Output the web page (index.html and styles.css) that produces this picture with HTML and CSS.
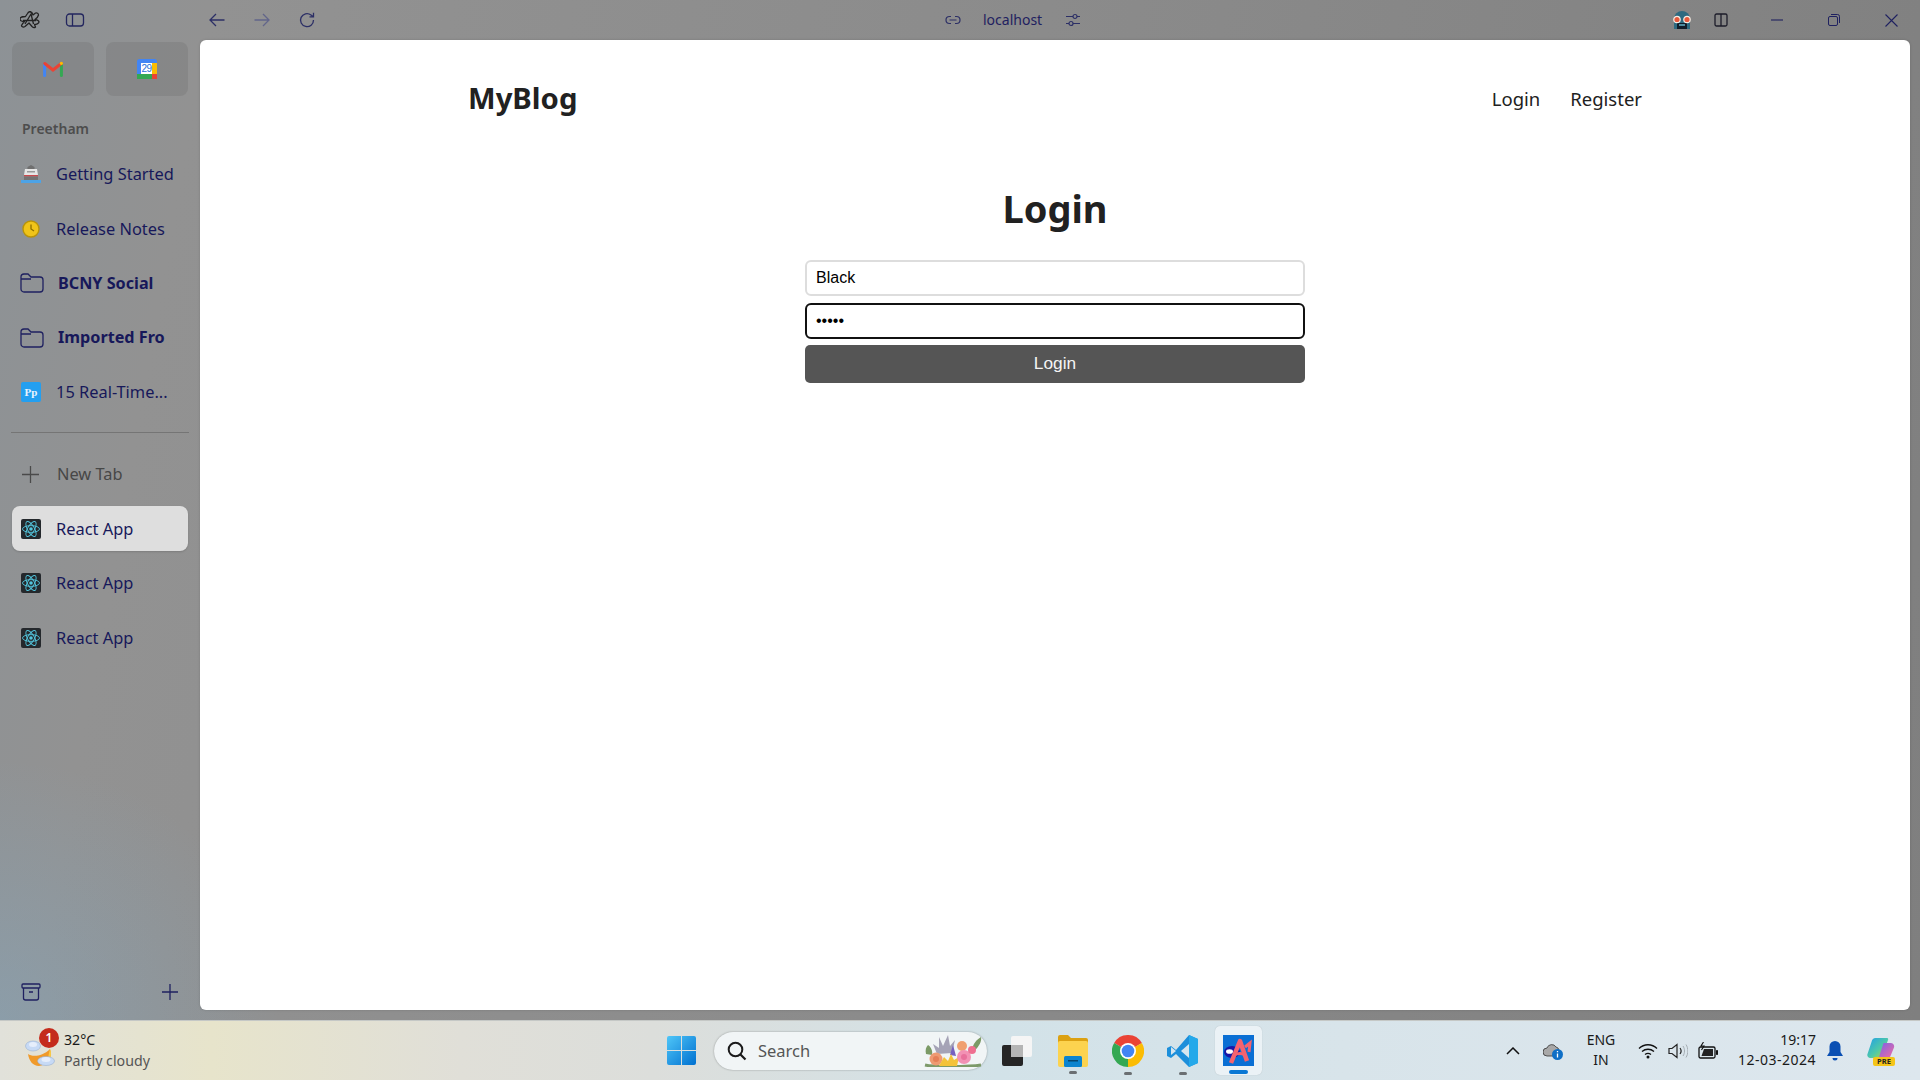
FILE: index.html
```html
<!DOCTYPE html>
<html lang="en">
<head>
  <meta charset="UTF-8">
  <title>React App</title>
  <link rel="stylesheet" href="styles.css">
</head>
<body>

<div class="browser">
  <!-- top bar of the browser window -->
  <header class="toolbar">
    <svg class="icon logo-arc" viewBox="0 0 20 18"><path d="M10.500 1c1.500 0 2 1.500 2.500 3l2.500-2c1.500-.5 3 .5 3 2-.5 2-2 3.500-3.500 4.500 1.500.5 4 1 4 2.500 0 1.500-3 2.500-4.500 2.500l1 2.500c-1 1-2.500.5-3.500-.5l-3-3.500-4 3.500c-1.500 1-3.500.5-3.500-1 .5-1.500 2-3 3-4-2 0-4.500-.5-4.500-2.500s3.500-2.500 5.500-2.500l2-3c.5-1 1.500-2 3-2z M5 13 11 3l2.500 10 M3 9.500h13" fill="none" stroke="#222" stroke-width="1.300" stroke-linejoin="round"/></svg>
    <svg class="icon panel-toggle" viewBox="0 0 20 16"><rect x="1.500" y="2" width="17" height="12" rx="3" fill="none" stroke="#23265e" stroke-width="1.300"/><path d="M7.500 2v12" stroke="#23265e" stroke-width="1.300"/></svg>
    <svg class="icon nav-back" viewBox="0 0 16 16"><path d="M15.500 8H1 M7 2 1 8l6 6" fill="none" stroke="#2c2f66" stroke-width="1.300"/></svg>
    <svg class="icon nav-forward" viewBox="0 0 16 16"><path d="M.5 8H15 M9 2l6 6-6 6" fill="none" stroke="#62658a" stroke-width="1.300"/></svg>
    <svg class="icon nav-reload" viewBox="0 0 16 16"><path d="M14.500 8A6.500 6.500 0 1 1 12 3l2 1.500 M14.500 .8v4h-4" fill="none" stroke="#2c2f66" stroke-width="1.300"/></svg>
    <svg class="icon url-link" viewBox="0 0 16 12"><path d="M6 2.500H4.500a3.500 3.500 0 0 0 0 7H6 M10 2.500h1.500a3.500 3.500 0 0 1 0 7H10 M4.500 6h7" fill="none" stroke="#2c2f66" stroke-width="1.200"/></svg>
    <span class="url-text">localhost</span>
    <svg class="icon url-tune" viewBox="0 0 16 14"><path d="M1 3.500h7 M12 3.500h3 M1 10.500h3 M8 10.500h7" stroke="#2c2f66" stroke-width="1.200"/><circle cx="10" cy="3.500" r="2" fill="none" stroke="#2c2f66" stroke-width="1.200"/><circle cx="6" cy="10.500" r="2" fill="none" stroke="#2c2f66" stroke-width="1.200"/></svg>

    <svg class="icon avatar" viewBox="0 0 20 20"><path d="M2 19V9a8 8 0 0 1 16 0v10z" fill="#2d6a80"/><rect x="5" y="13" width="10" height="6" fill="#111d28"/><rect x="7" y="14" width="6" height="2" fill="#4d8ca0"/><circle cx="5" cy="9.500" r="3.200" fill="#e8593b" stroke="#f3eee6" stroke-width="1.200"/><circle cx="15" cy="9.500" r="3.200" fill="#e8593b" stroke="#f3eee6" stroke-width="1.200"/></svg>
    <svg class="icon split" viewBox="0 0 14 14"><rect x="1" y="1" width="12" height="12" rx="1.500" fill="none" stroke="#1d1d2a" stroke-width="1.300"/><path d="M7 1v12" stroke="#1d1d2a" stroke-width="1.300"/></svg>
    <svg class="icon win-min" viewBox="0 0 12 12"><path d="M0 6h12" stroke="#1f2160" stroke-width="1.100"/></svg>
    <svg class="icon win-max" viewBox="0 0 12 12"><rect x=".5" y="2.500" width="9" height="9" rx="1.500" fill="none" stroke="#1f2160"/><path d="M3 .5h6.500a2 2 0 0 1 2 2V9" fill="none" stroke="#1f2160"/></svg>
    <svg class="icon win-close" viewBox="0 0 13 13"><path d="M.5 .5l12 12 M12.500 .5l-12 12" stroke="#1f2160" stroke-width="1.100"/></svg>
  </header>

  <div class="browser-body">
    <aside class="sidebar">
      <div class="pinned">
        <div class="pinned-tile">
          <svg class="tile-icon" viewBox="0 0 20 16"><path d="M1.600 14.500V3" stroke="#4285f4" stroke-width="3" stroke-linecap="round"/><path d="M18.400 14.500V3" stroke="#34a853" stroke-width="3" stroke-linecap="round"/><path d="M1.800 2.500 10 9l8.200-6.500" fill="none" stroke="#ea4335" stroke-width="3" stroke-linecap="round"/><circle cx="18.400" cy="2.300" r="1.600" fill="#fbbc04"/></svg>
        </div>
        <div class="pinned-tile">
          <svg class="tile-icon" viewBox="0 0 20 20"><rect width="20" height="20" rx="2.500" fill="#4285f4"/><rect x="15" y="4" width="5" height="12" fill="#fbbc04"/><rect y="15" width="20" height="5" fill="#34a853"/><rect x="15" y="15" width="5" height="5" fill="#ea4335"/><rect x="4" y="4" width="11" height="11" fill="#fff"/><text x="9.500" y="13.300" class="cal-day">29</text></svg>
        </div>
      </div>

      <div class="section-name">Preetham</div>

      <ul class="tab-list">
        <li class="tab">
          <svg class="tab-icon" viewBox="0 0 20 20"><path d="M6.500 6V3L10 1l3.500 2v3z" fill="#6f6f6f"/><path d="M4 5h12l1 6H3z" fill="#e6e6e6"/><rect x="6" y="7" width="8" height="1.500" fill="#9a9a9a"/><rect x="3" y="11" width="14" height="1.500" fill="#c9494d"/><rect x="3" y="12.500" width="14" height="3.500" fill="#747474"/><rect y="16" width="20" height="3" fill="#4da3e6"/></svg>
          <span>Getting Started</span>
        </li>
        <li class="tab">
          <svg class="tab-icon" viewBox="0 0 20 20"><circle cx="10" cy="10" r="8" fill="#f0c419" stroke="#b8930a" stroke-width="1.400"/><path d="M10 5.500V10l3 2" fill="none" stroke="#8d6f00" stroke-width="1.300"/></svg>
          <span>Release Notes</span>
        </li>
        <li class="tab tab-folder">
          <svg class="folder-icon" viewBox="0 0 24 20"><path d="M1 4a3 3 0 0 1 3-3h4l3 3h9a3 3 0 0 1 3 3v9a3 3 0 0 1-3 3H4a3 3 0 0 1-3-3z M1 6h10" fill="none" stroke="#1f2160" stroke-width="1.300"/></svg>
          <span>BCNY Social</span>
        </li>
        <li class="tab tab-folder">
          <svg class="folder-icon" viewBox="0 0 24 20"><path d="M1 4a3 3 0 0 1 3-3h4l3 3h9a3 3 0 0 1 3 3v9a3 3 0 0 1-3 3H4a3 3 0 0 1-3-3z M1 6h10" fill="none" stroke="#1f2160" stroke-width="1.300"/></svg>
          <span>Imported Fro</span>
        </li>
        <li class="tab">
          <svg class="tab-icon" viewBox="0 0 20 20"><rect width="20" height="20" rx="2" fill="#239ff0"/><text x="10" y="13.500" class="pp-mark">Pp</text></svg>
          <span>15 Real-Time...</span>
        </li>
      </ul>

      <div class="divider"></div>

      <ul class="tab-list">
        <li class="tab tab-new">
          <svg class="new-icon" viewBox="0 0 16 16"><path d="M8 0v16 M0 8h16" stroke="#4a4a4a" stroke-width="1.200"/></svg>
          <span>New Tab</span>
        </li>
        <li class="tab tab-active">
          <svg class="tab-icon" viewBox="0 0 20 20"><use href="#react-logo"/></svg>
          <span>React App</span>
        </li>
        <li class="tab">
          <svg class="tab-icon" viewBox="0 0 20 20"><use href="#react-logo"/></svg>
          <span>React App</span>
        </li>
        <li class="tab">
          <svg class="tab-icon" viewBox="0 0 20 20"><use href="#react-logo"/></svg>
          <span>React App</span>
        </li>
      </ul>

      <div class="sidebar-foot">
        <svg class="foot-icon" viewBox="0 0 20 20"><rect x="1" y="2" width="18" height="4" rx="1" fill="none" stroke="#1f2160" stroke-width="1.300"/><path d="M2.500 6v10a2 2 0 0 0 2 2h11a2 2 0 0 0 2-2V6 M8 10h4" fill="none" stroke="#1f2160" stroke-width="1.300"/></svg>
        <svg class="foot-plus" viewBox="0 0 16 16"><path d="M8 0v16 M0 8h16" stroke="#1f2160" stroke-width="1.300"/></svg>
      </div>
    </aside>

    <main class="page">
      <div class="container">
        <nav class="site-nav">
          <div class="brand">MyBlog</div>
          <div class="site-links">
            <a href="#">Login</a>
            <a href="#">Register</a>
          </div>
        </nav>

        <h1 class="form-title">Login</h1>
        <form class="login-form">
          <input type="text" value="Black">
          <input type="password" class="focused" value="12345">
          <button type="button">Login</button>
        </form>
      </div>
    </main>
  </div>
</div>

<footer class="taskbar">
  <div class="weather">
    <svg class="weather-icon" viewBox="0 0 30 30">
      <path d="M3 17c4 3 14 3 22-5 3 8-2 16-11 17-6 0-10-5-11-12z" fill="#f09a2a"/>
      <path d="M25 12c2 5 1 9-2 12 0-4 1-8 2-12z" fill="#f7c948"/>
      <ellipse cx="8" cy="9" rx="7.500" ry="5" fill="#c7daf5" stroke="#8fa9cc" stroke-width=".5"/>
      <ellipse cx="8" cy="7.500" rx="4" ry="2.500" fill="#e6eefb"/>
      <ellipse cx="21" cy="24" rx="8.500" ry="4.500" fill="#c7daf5" stroke="#8fa9cc" stroke-width=".5"/>
      <ellipse cx="21" cy="22.500" rx="4.500" ry="2.500" fill="#e6eefb"/>
    </svg>
    <span class="weather-badge">1</span>
    <div class="weather-text">
      <div class="temp">32°C</div>
      <div class="sky">Partly cloudy</div>
    </div>
  </div>

  <div class="task-icons">
    <svg class="win-logo" viewBox="0 0 29 29">
      <defs><linearGradient id="winBlue" x1="0" y1="0" x2="1" y2="1"><stop offset="0" stop-color="#4fc6f8"/><stop offset="1" stop-color="#0070d0"/></linearGradient></defs>
      <path d="M0 2a2 2 0 0 1 2-2h12v14H0z M15 0h12a2 2 0 0 1 2 2v12H15z M0 15h14v14H2a2 2 0 0 1-2-2z M15 15h14v12a2 2 0 0 1-2 2H15z" fill="url(#winBlue)"/>
    </svg>

    <div class="search-box">
      <svg class="search-icon" viewBox="0 0 20 20"><circle cx="8.500" cy="8.500" r="6.800" fill="none" stroke="#1b1b1b" stroke-width="2"/><path d="m13.500 13.500 5 5" stroke="#1b1b1b" stroke-width="2.200"/></svg>
      <span class="search-label">Search</span>
      <svg class="search-flowers" viewBox="0 0 62 33">
        <path d="M3 31c8 2 44 2 56 0" fill="none" stroke="#7d9a6a" stroke-width="3"/>
        <path d="M50 16c1-6 4-10 9-13 1 4-2 10-7 14z M4 20C3 16 4 13 6 11c3 2 5 6 4 10z" fill="#7b9a66"/>
        <path d="M15 20 11 10l6 4 0-11 4 9 5-11 2 11 5-6-3 13z" fill="#a5a3b6"/>
        <circle cx="14" cy="25" r="6.500" fill="#ee9a72"/>
        <circle cx="14" cy="25" r="3" fill="#e47f58"/>
        <path d="M31 11l3 11-6-1z" fill="#7660c0"/>
        <circle cx="40" cy="12" r="5" fill="#f0a070"/>
        <path d="M17 32l5-9 4 4 3-7 3 6 5-3-2 9z" fill="#f3c33a"/>
        <circle cx="42" cy="23" r="7" fill="#f291b4"/>
        <circle cx="42" cy="23" r="3" fill="#e8709c"/>
        <circle cx="50" cy="16" r="4" fill="#ef6f90"/>
      </svg>
    </div>

    <svg class="task-view" viewBox="0 0 30 30">
      <rect x="9" y="0" width="21" height="21" rx="2" fill="#f5f5f5"/>
      <rect x="9" y="9" width="12" height="12" fill="#b5b5b5"/>
      <path d="M2 9h7v12h12v7a2 2 0 0 1-2 2H2a2 2 0 0 1-2-2V11a2 2 0 0 1 2-2z" fill="#252525"/>
    </svg>

    <div class="task-app running">
      <svg class="app-folder" viewBox="0 0 30 34">
        <path d="M0 3a2 2 0 0 1 2-2h8l3 3h15a2 2 0 0 1 2 2v5H0z" fill="#dca112"/>
        <rect y="7" width="30" height="26" rx="2" fill="#fcd34f"/>
        <rect x="6" y="22" width="18" height="11" rx="1.500" fill="#0b84cf"/>
        <rect x="10" y="26" width="10" height="1.500" fill="#05466f"/>
      </svg>
    </div>

    <div class="task-app running">
      <svg class="app-chrome" viewBox="0 0 32 32">
        <path d="M16 16 2.140 8A16 16 0 0 1 29.860 8z" fill="#ea4335"/>
        <path d="M16 16 29.860 8A16 16 0 0 1 16 32z" fill="#fbbc04"/>
        <path d="M16 16 16 32A16 16 0 0 1 2.140 8z" fill="#34a853"/>
        <circle cx="16" cy="16" r="8" fill="#fff"/>
        <circle cx="16" cy="16" r="6.300" fill="#4285f4"/>
      </svg>
    </div>

    <div class="task-app running">
      <svg class="app-code" viewBox="0 0 31 32">
        <path d="M22 0l9 4v24l-9 4-13-13-5 4-4-2v-8l4-2 5 4z" fill="#1c8fdb"/>
        <path d="M22 0l9 4v24l-9 4z" fill="#25a9ea"/>
        <path d="M22 9l-8 7 8 7z" fill="#d6e6ef"/>
        <path d="M4 12l5 4-5 4z" fill="#d6e6ef"/>
      </svg>
    </div>

    <div class="task-app active-app">
      <svg class="app-draw" viewBox="0 0 31 31">
        <rect width="31" height="31" fill="#0a6fd4"/>
        <ellipse cx="9" cy="17" rx="8" ry="6" fill="#1616a8"/>
        <ellipse cx="6.500" cy="16.500" rx="3.500" ry="2.300" fill="#fff"/>
        <path d="M8 28 17 6l7 20" fill="none" stroke="#f4636f" stroke-width="4.500" stroke-linejoin="round"/>
        <path d="M22 12l5-4-1 9 M11 20c4-2 8-2 11 0" fill="none" stroke="#f4636f" stroke-width="3"/>
      </svg>
    </div>
  </div>

  <div class="tray">
    <svg class="tray-chevron" viewBox="0 0 14 8"><path d="M1 7l6-6 6 6" fill="none" stroke="#111" stroke-width="1.500"/></svg>
    <svg class="tray-cloud" viewBox="0 0 20 18"><path d="M4 14a4 4 0 0 1 0-8 5 5 0 0 1 9-1 4 4 0 0 1 3 3v6z" fill="#a8a8a8" stroke="#333" stroke-width=".8"/><circle cx="14.500" cy="12.500" r="5.500" fill="#0f6fc6"/><path d="M14.500 11.500v4 M14.500 9v1.300" stroke="#fff" stroke-width="1.300"/></svg>
    <div class="tray-lang">ENG<br>IN</div>
    <svg class="tray-wifi" viewBox="0 0 20 16"><path d="M1 5.500c5-5 13-5 18 0 M4 8.500c3.500-3 8.500-3 12 0 M7 11.500c2-1.500 4-1.500 6 0" fill="none" stroke="#111" stroke-width="1.300"/><circle cx="10" cy="14" r="1.500" fill="#111"/></svg>
    <svg class="tray-sound" viewBox="0 0 20 16"><path d="M1 5.500h3l5-4v13l-5-4H1z" fill="none" stroke="#222" stroke-width="1.200"/><path d="M12 5c1.500 2 1.500 4 0 6" fill="none" stroke="#222" stroke-width="1.200"/><path d="M15 3c2 3 2 7 0 10 M18 1.500c2.500 4 2.500 9 0 13" fill="none" stroke="#a5adb3" stroke-width="1"/></svg>
    <svg class="tray-battery" viewBox="0 0 20 18"><rect x="1" y="5" width="16" height="11" rx="1.500" fill="#d8e4ea" stroke="#111" stroke-width="1.300"/><path d="M3.500 14 6 7h9v7z" fill="#222"/><rect x="18" y="8" width="2" height="5" rx=".8" fill="#111"/><path d="M5.500 0 3 4h3L3.500 8" fill="none" stroke="#111" stroke-width="1.100"/></svg>
    <div class="tray-clock">19:17<br><span class="clock-date">12-03-2024</span></div>
    <svg class="tray-bell" viewBox="0 0 16 20"><path d="M8 0a5.500 5.500 0 0 1 5.500 5.500V11l2.500 4H0l2.500-4V5.500A5.500 5.500 0 0 1 8 0z" fill="#0a4fb3"/><path d="M5.500 17h5a2.500 2.500 0 0 1-5 0z" fill="#0a4fb3"/></svg>
    <div class="copilot">
      <svg class="copilot-mark" viewBox="0 0 28 24">
        <defs>
          <linearGradient id="coA" x1="0" y1="0" x2="1" y2="1"><stop offset="0" stop-color="#1f9fe8"/><stop offset=".55" stop-color="#4fc9a8"/><stop offset="1" stop-color="#c5d830"/></linearGradient>
          <linearGradient id="coB" x1="0" y1="0" x2="1" y2="1"><stop offset="0" stop-color="#7a62e8"/><stop offset="1" stop-color="#f56ca0"/></linearGradient>
        </defs>
        <path d="M9 1h11c1.500 0 2 1 1.500 2L15 21H4a3 3 0 0 1-3-4l4-12c.5-2.500 2-4 4-4z" fill="url(#coA)"/>
        <path d="M17 6h7a3.500 3.500 0 0 1 3.500 4.500L24 19c-.5 1.500-2 2.500-4 2.500h-8z" fill="url(#coB)"/>
      </svg>
      <span class="copilot-tag">PRE</span>
    </div>
  </div>
</footer>

<!-- shared react favicon -->
<svg class="defs-only">
  <defs>
    <g id="react-logo">
      <rect width="20" height="20" rx="2" fill="#24282c"/>
      <g fill="none" stroke="#53c6de" stroke-width=".9">
        <ellipse cx="10" cy="10" rx="8.500" ry="3.400"/>
        <ellipse cx="10" cy="10" rx="8.500" ry="3.400" transform="rotate(60 10 10)"/>
        <ellipse cx="10" cy="10" rx="8.500" ry="3.400" transform="rotate(120 10 10)"/>
      </g>
      <circle cx="10" cy="10" r="1.800" fill="#53c6de"/>
    </g>
  </defs>
</svg>

</body>
</html>
```

FILE: styles.css
```css
* {
  box-sizing: border-box;
}

body {
  margin: 0;
  height: 1080px;
  overflow: hidden;
  font-family: "Noto Sans", "Open Sans", sans-serif;
  display: flex;
  flex-direction: column;
}

svg {
  display: block;
  flex-shrink: 0;
}

.defs-only {
  width: 0;
  height: 0;
  position: absolute;
}

/* browser window */
.browser {
  height: 1020px;
  display: flex;
  flex-direction: column;
  background:
    radial-gradient(280px 260px at 0 1020px, rgba(130, 175, 205, 0.38), rgba(130, 175, 205, 0)),
    linear-gradient(100deg, #8d9296 0, #929292 10%, #8b8b8b 50%, #7f7f7f 100%);
}

.toolbar {
  height: 40px;
  flex-shrink: 0;
  display: flex;
  align-items: center;
  padding-left: 20px;
}

.logo-arc { width: 20px; height: 18px; }
.panel-toggle { width: 20px; height: 16px; margin-left: 25px; }
.nav-back { width: 16px; height: 16px; margin-left: 124px; }
.nav-forward { width: 16px; height: 16px; margin-left: 29px; }
.nav-reload { width: 16px; height: 16px; margin-left: 29px; }
.url-link { width: 16px; height: 12px; margin-left: 630px; }

.url-text {
  margin-left: 22px;
  margin-top: -2px;
  width: 61px;
  font-size: 14px;
  color: #1f2160;
  white-space: nowrap;
}

.url-tune { width: 16px; height: 14px; margin-left: 21px; }
.avatar { width: 20px; height: 20px; margin-left: 591px; }
.split { width: 14px; height: 14px; margin-left: 22px; }
.win-min { width: 12px; height: 12px; margin-left: 43px; }
.win-max { width: 12px; height: 12px; margin-left: 45px; }
.win-close { width: 13px; height: 13px; margin-left: 45px; }

.browser-body {
  flex: 1;
  display: flex;
  min-height: 0;
}

/* sidebar */
.sidebar {
  width: 200px;
  flex-shrink: 0;
  padding: 2px 12px 18px;
  display: flex;
  flex-direction: column;
}

.pinned {
  display: grid;
  grid-template-columns: 82px 82px;
  gap: 12px;
}

.pinned-tile {
  height: 54px;
  border-radius: 8px;
  background-color: rgba(105, 105, 105, 0.25);
  display: flex;
  align-items: center;
  justify-content: center;
}

.tile-icon {
  width: 20px;
  height: 20px;
}

.cal-day {
  font-family: "Liberation Sans", sans-serif;
  font-size: 10px;
  letter-spacing: -0.5px;
  fill: #2a6fd8;
  text-anchor: middle;
}

.section-name {
  height: 24px;
  line-height: 24px;
  margin: 21px 0 10.500px 10px;
  font-size: 14px;
  font-weight: 600;
  color: #4d4d4d;
}

.tab-list {
  list-style: none;
  margin: 0;
  padding: 0;
  display: flex;
  flex-direction: column;
  gap: 9.500px;
}

.tab {
  height: 45px;
  display: flex;
  align-items: center;
  gap: 15px;
  padding-left: 9px;
  border-radius: 8px;
  font-size: 16.400px;
  color: #17185a;
  white-space: nowrap;
}

.tab span {
  margin-top: -1px;
}

.tab-icon {
  width: 20px;
  height: 20px;
}

.pp-mark {
  font-family: "Liberation Serif", serif;
  font-size: 11px;
  font-weight: bold;
  fill: #e8f4fe;
  text-anchor: middle;
}

.tab-folder {
  gap: 14px;
  padding-left: 8px;
  font-size: 16.200px;
  font-weight: 700;
}

.folder-icon {
  width: 24px;
  height: 20px;
}

.tab-new {
  color: #474747;
  gap: 18px;
  padding-left: 10px;
}

.new-icon {
  width: 17px;
  height: 17px;
}

.tab-active {
  background-color: #dedede;
  box-shadow: 0 1px 2px rgba(0, 0, 0, 0.15);
}

.divider {
  height: 1px;
  margin: 17px 0 19px -1px;
  width: 178px;
  background-color: #757575;
}

.sidebar-foot {
  margin-top: auto;
  display: flex;
  align-items: center;
  justify-content: space-between;
  padding: 0 10px 0 9px;
}

.foot-icon {
  width: 20px;
  height: 20px;
}

.foot-plus {
  width: 16px;
  height: 16px;
}

/* page content */
.page {
  flex: 1;
  margin: 0 10px 10px 0;
  background-color: #fff;
  border-radius: 6px;
  box-shadow: 0 0 3px rgba(0, 0, 0, 0.15);
}

.container {
  width: 1174px;
  margin: 0 auto;
}

.site-nav {
  height: 120px;
  padding-bottom: 4px;
  display: flex;
  align-items: center;
  justify-content: space-between;
  color: #212121;
}

.brand {
  font-size: 29.300px;
  font-weight: 700;
}

.site-links {
  display: flex;
  gap: 30px;
}

.site-links a {
  font-size: 18.500px;
  color: #212121;
  text-decoration: none;
}

.form-title {
  margin: 18px 0 0;
  height: 60px;
  line-height: 60px;
  text-align: center;
  font-size: 38px;
  font-weight: 700;
  color: #212121;
}

.login-form {
  width: 500px;
  margin: 22px auto 0;
  display: flex;
  flex-direction: column;
}

.login-form input {
  height: 36px;
  margin-bottom: 7px;
  padding: 0 9px;
  border: 2px solid #dddddd;
  border-radius: 6px;
  font-family: "Liberation Sans", Arial, sans-serif;
  font-size: 16px;
  color: #000;
  outline: none;
}

.login-form input.focused {
  border-color: #111;
  margin-bottom: 6px;
}

.login-form button {
  height: 38px;
  padding: 0 0 2px;
  background-color: #555;
  color: #f4f4f4;
  border: none;
  border-radius: 5px;
  font-family: "Liberation Sans", Arial, sans-serif;
  font-size: 17.300px;
}

/* windows taskbar */
.taskbar {
  height: 60px;
  flex-shrink: 0;
  display: grid;
  grid-template-columns: 667px auto 1fr;
  align-items: center;
  border-top: 1px solid #c5c8c6;
  background: linear-gradient(90deg, #e1e1da 0, #e7e4cb 11%, #e0dfd8 24%, #dcdedb 34%, #d2e2e8 52%, #d8e4ea 70%, #dde7ee 100%);
}

.weather {
  position: relative;
  display: flex;
  align-items: center;
  padding-left: 25px;
  gap: 9px;
  color: #1a1a1a;
}

.weather-icon {
  width: 30px;
  height: 30px;
  margin-top: 2px;
}

.weather-badge {
  position: absolute;
  left: 39px;
  top: -3px;
  width: 20px;
  height: 20px;
  border-radius: 50%;
  background-color: #c42b1c;
  color: #fff;
  font-size: 12px;
  font-weight: 600;
  line-height: 20px;
  text-align: center;
}

.weather-text {
  font-size: 14.200px;
  line-height: 21px;
  margin-top: -2px;
}

.sky {
  color: #555;
}

.task-icons {
  display: flex;
  align-items: center;
}

.win-logo {
  width: 29px;
  height: 29px;
}

.search-box {
  width: 273px;
  height: 38px;
  margin: 0 15px 0 18px;
  padding: 0 3px 0 13px;
  display: flex;
  align-items: center;
  border-radius: 19px;
  background-color: #f1f5f6;
  box-shadow: 0 0 2px rgba(0, 0, 0, 0.35);
}

.search-icon {
  width: 20px;
  height: 20px;
}

.search-label {
  margin-left: 11px;
  margin-top: -1px;
  font-size: 16.500px;
  color: #555;
}

.search-flowers {
  width: 62px;
  height: 33px;
  margin-left: auto;
}

.task-view {
  width: 30px;
  height: 30px;
}

.task-app {
  position: relative;
  display: flex;
  align-items: center;
  justify-content: center;
}

.task-app.running::after {
  content: "";
  position: absolute;
  left: 50%;
  top: 37px;
  width: 8px;
  height: 3px;
  margin-left: -4px;
  border-radius: 2px;
  background-color: #6b6f72;
}

.app-folder { width: 30px; height: 34px; }
.app-chrome { width: 32px; height: 32px; }
.app-code { width: 31px; height: 32px; }

.task-view + .task-app { margin-left: 26px; }
.task-view + .task-app + .task-app { margin-left: 24px; }
.task-view + .task-app + .task-app + .task-app { margin-left: 23px; }

.active-app {
  width: 47px;
  height: 49px;
  margin-left: 17px;
  border-radius: 5px;
  background-color: #ebf2f6;
  box-shadow: 0 0 1px rgba(0, 0, 0, 0.2);
}

.active-app::after {
  content: "";
  position: absolute;
  left: 14px;
  bottom: 1px;
  width: 19px;
  height: 4px;
  border-radius: 2px;
  background-color: #0a78d4;
}

.app-draw {
  width: 31px;
  height: 31px;
}

.tray {
  display: flex;
  align-items: center;
  justify-content: flex-end;
  padding-right: 25px;
  color: #1a1a1a;
}

.tray-chevron { width: 14px; height: 8px; }
.tray-cloud { width: 20px; height: 18px; margin-left: 23px; }

.tray-lang {
  width: 30px;
  margin-left: 23px;
  margin-top: -2px;
  font-size: 14px;
  line-height: 20px;
  text-align: center;
}

.tray-wifi { width: 20px; height: 16px; margin-left: 22px; }
.tray-sound { width: 20px; height: 16px; margin-left: 10px; }
.tray-battery { width: 20px; height: 18px; margin-left: 10px; }

.tray-clock {
  width: 79px;
  margin-left: 19px;
  margin-top: -2px;
  font-size: 14px;
  line-height: 20px;
  text-align: right;
  white-space: nowrap;
}

.clock-date {
  letter-spacing: 0.500px;
}

.tray-bell { width: 16px; height: 20px; margin-left: 11px; }

.copilot {
  position: relative;
  width: 29px;
  height: 28px;
  margin-left: 23px;
}

.copilot-mark {
  width: 29px;
  height: 24px;
}

.copilot-tag {
  position: absolute;
  left: 7px;
  bottom: -1px;
  width: 22px;
  height: 9px;
  border-radius: 2px;
  background-color: #f5c518;
  color: #222;
  font-size: 7.500px;
  font-weight: 700;
  line-height: 9px;
  text-align: center;
}
```
